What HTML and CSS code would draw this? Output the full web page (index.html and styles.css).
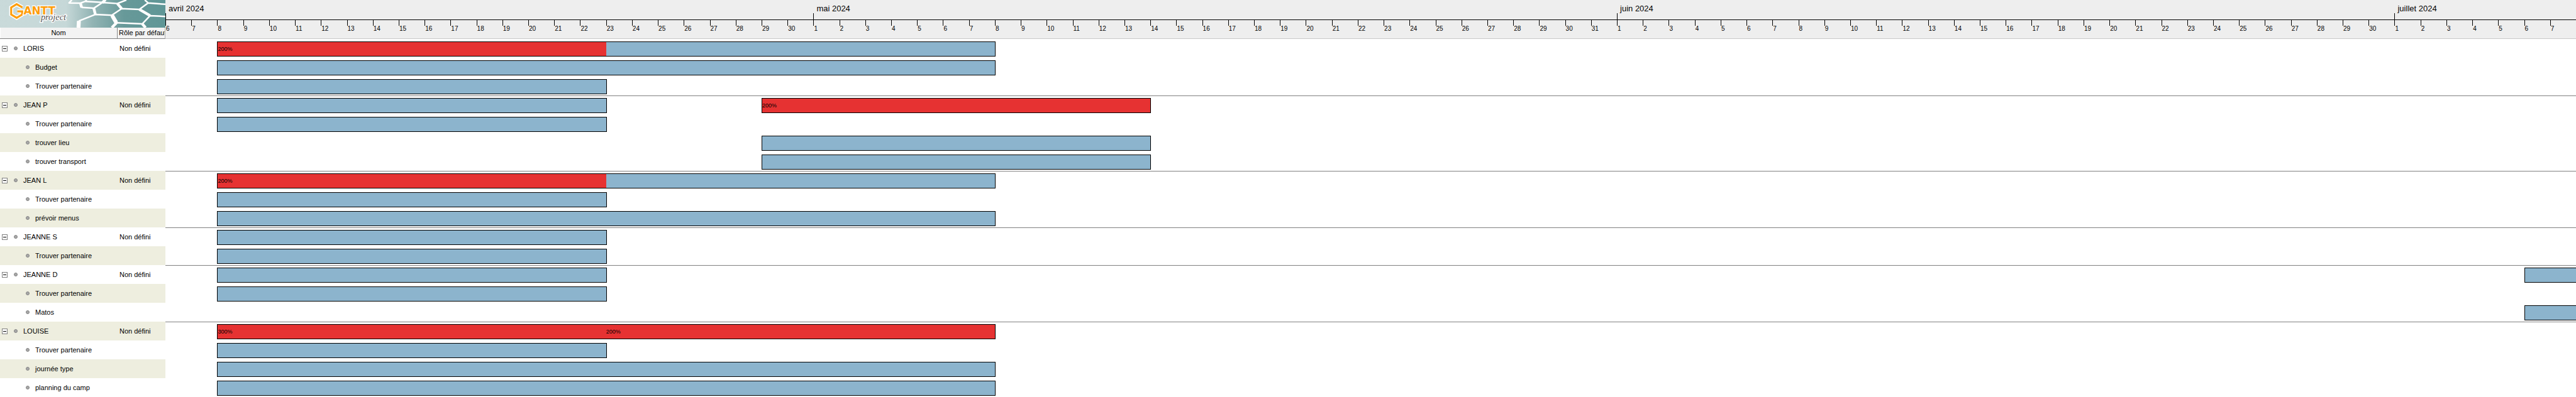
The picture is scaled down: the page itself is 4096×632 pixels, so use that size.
FILE: index.html
```html
<!DOCTYPE html>
<html lang="fr">
<head>
<meta charset="utf-8">
<title>GanttProject - Ressources</title>
<link rel="stylesheet" href="styles.css">
</head>
<body>
<main class="app">
  <section class="resources">
    <svg class="banner" viewBox="0 0 843 141" role="img" aria-label="GanttProject">
      <defs>
        <linearGradient id="sky" x1="0" x2="1" y1="0" y2="0">
          <stop offset="0" stop-color="#c9dada"/>
          <stop offset="0.4" stop-color="#c6d8d8"/>
          <stop offset="0.56" stop-color="#92b4b4"/>
          <stop offset="0.75" stop-color="#679999"/>
          <stop offset="1" stop-color="#5f9696"/>
        </linearGradient>
      </defs>
      <rect width="843" height="141" fill="url(#sky)"/>
      <g transform="translate(330 0)" fill="none" stroke="#fff" stroke-linejoin="round">
        <path stroke-width="8" d="M36 0L22 15L80 16L104 7L190 12L210 0M104 7L112 0M85 38L148 42L192 13L268 18L314 0M155 74L240 78L290 44L380 48L425 15L513 22M425 15L408 0M155 74L72 107M265 116L395 122L435 80L513 84"/>
        <path stroke-width="14" d="M80 16L86 38M148 42L156 74M192 13L206 0M268 18L290 44M240 78L264 116L240 141M380 48L435 80M72 107L70 141M395 122L412 141"/>
        <path stroke-width="20" d="M72 107L70 141M242 80L262 114"/>
      </g>
      <g fill="none" stroke-linejoin="miter">
        <path stroke="#fff" stroke-width="20" d="M114 38L85 21L57 38V74L85 91L113 74V58H88"/>
        <path stroke="#ff9d0a" stroke-width="10" d="M114 38L85 21L57 38V74L85 91L113 74V58H88"/>
      </g>
      <text class="brand" x="120" y="74">ANTT</text>
      <text class="brand-sub" x="208" y="104">project</text>
    </svg>
    <table class="tree">
      <colgroup><col class="col-name"><col class="col-role"></colgroup>
      <thead>
        <tr><th scope="col">Nom</th><th scope="col" class="role-head">Rôle par défaut</th></tr>
      </thead>
      <tbody>
        <tr><td><div class="node"><button class="toggle" aria-label="Réduire LORIS"></button><i class="dot"></i>LORIS</div></td><td>Non défini</td></tr>
        <tr><td><div class="node child"><i class="dot"></i>Budget</div></td><td></td></tr>
        <tr><td><div class="node child"><i class="dot"></i>Trouver partenaire</div></td><td></td></tr>
        <tr><td><div class="node"><button class="toggle" aria-label="Réduire JEAN P"></button><i class="dot"></i>JEAN P</div></td><td>Non défini</td></tr>
        <tr><td><div class="node child"><i class="dot"></i>Trouver partenaire</div></td><td></td></tr>
        <tr><td><div class="node child"><i class="dot"></i>trouver lieu</div></td><td></td></tr>
        <tr><td><div class="node child"><i class="dot"></i>trouver transport</div></td><td></td></tr>
        <tr><td><div class="node"><button class="toggle" aria-label="Réduire JEAN L"></button><i class="dot"></i>JEAN L</div></td><td>Non défini</td></tr>
        <tr><td><div class="node child"><i class="dot"></i>Trouver partenaire</div></td><td></td></tr>
        <tr><td><div class="node child"><i class="dot"></i>prévoir menus</div></td><td></td></tr>
        <tr><td><div class="node"><button class="toggle" aria-label="Réduire JEANNE S"></button><i class="dot"></i>JEANNE S</div></td><td>Non défini</td></tr>
        <tr><td><div class="node child"><i class="dot"></i>Trouver partenaire</div></td><td></td></tr>
        <tr><td><div class="node"><button class="toggle" aria-label="Réduire JEANNE D"></button><i class="dot"></i>JEANNE D</div></td><td>Non défini</td></tr>
        <tr><td><div class="node child"><i class="dot"></i>Trouver partenaire</div></td><td></td></tr>
        <tr><td><div class="node child"><i class="dot"></i>Matos</div></td><td></td></tr>
        <tr><td><div class="node"><button class="toggle" aria-label="Réduire LOUISE"></button><i class="dot"></i>LOUISE</div></td><td>Non défini</td></tr>
        <tr><td><div class="node child"><i class="dot"></i>Trouver partenaire</div></td><td></td></tr>
        <tr><td><div class="node child"><i class="dot"></i>journée type</div></td><td></td></tr>
        <tr><td><div class="node child"><i class="dot"></i>planning du camp</div></td><td></td></tr>
      </tbody>
    </table>
  </section>

  <section class="chart">
    <header class="axis">
      <div class="months days-grid">
        <div class="month" style="grid-column: 1 / 26">avril 2024</div>
        <div class="month" style="grid-column: 26 / 57">mai 2024</div>
        <div class="month" style="grid-column: 57 / 87">juin 2024</div>
        <div class="month" style="grid-column: 87 / 94">juillet 2024</div>
      </div>
      <ol class="days days-grid">
        <li>6</li><li>7</li><li>8</li><li>9</li><li>10</li><li>11</li><li>12</li><li>13</li><li>14</li><li>15</li><li>16</li><li>17</li><li>18</li><li>19</li><li>20</li><li>21</li><li>22</li><li>23</li><li>24</li><li>25</li><li>26</li><li>27</li><li>28</li><li>29</li><li>30</li>
        <li>1</li><li>2</li><li>3</li><li>4</li><li>5</li><li>6</li><li>7</li><li>8</li><li>9</li><li>10</li><li>11</li><li>12</li><li>13</li><li>14</li><li>15</li><li>16</li><li>17</li><li>18</li><li>19</li><li>20</li><li>21</li><li>22</li><li>23</li><li>24</li><li>25</li><li>26</li><li>27</li><li>28</li><li>29</li><li>30</li><li>31</li>
        <li>1</li><li>2</li><li>3</li><li>4</li><li>5</li><li>6</li><li>7</li><li>8</li><li>9</li><li>10</li><li>11</li><li>12</li><li>13</li><li>14</li><li>15</li><li>16</li><li>17</li><li>18</li><li>19</li><li>20</li><li>21</li><li>22</li><li>23</li><li>24</li><li>25</li><li>26</li><li>27</li><li>28</li><li>29</li><li>30</li>
        <li>1</li><li>2</li><li>3</li><li>4</li><li>5</li><li>6</li><li>7</li>
      </ol>
    </header>
    <div class="row days-grid"><div class="bar over open-end" style="grid-column: 3 / 18">200%</div><div class="bar open-start" style="grid-column: 18 / 33"></div></div>
    <div class="row days-grid"><div class="bar" style="grid-column: 3 / 33"></div></div>
    <div class="row days-grid"><div class="bar" style="grid-column: 3 / 18"></div></div>
    <div class="row days-grid first"><div class="bar" style="grid-column: 3 / 18"></div><div class="bar over" style="grid-column: 24 / 39">200%</div></div>
    <div class="row days-grid"><div class="bar" style="grid-column: 3 / 18"></div></div>
    <div class="row days-grid"><div class="bar" style="grid-column: 24 / 39"></div></div>
    <div class="row days-grid"><div class="bar" style="grid-column: 24 / 39"></div></div>
    <div class="row days-grid first"><div class="bar over open-end" style="grid-column: 3 / 18">200%</div><div class="bar open-start" style="grid-column: 18 / 33"></div></div>
    <div class="row days-grid"><div class="bar" style="grid-column: 3 / 18"></div></div>
    <div class="row days-grid"><div class="bar" style="grid-column: 3 / 33"></div></div>
    <div class="row days-grid first"><div class="bar" style="grid-column: 3 / 18"></div></div>
    <div class="row days-grid"><div class="bar" style="grid-column: 3 / 18"></div></div>
    <div class="row days-grid first"><div class="bar" style="grid-column: 3 / 18"></div><div class="bar open-end" style="grid-column: 92 / 94"></div></div>
    <div class="row days-grid"><div class="bar" style="grid-column: 3 / 18"></div></div>
    <div class="row days-grid"><div class="bar open-end" style="grid-column: 92 / 94"></div></div>
    <div class="row days-grid first"><div class="bar over open-end" style="grid-column: 3 / 18">300%</div><div class="bar over open-start" style="grid-column: 18 / 33">200%</div></div>
    <div class="row days-grid"><div class="bar" style="grid-column: 3 / 18"></div></div>
    <div class="row days-grid"><div class="bar" style="grid-column: 3 / 33"></div></div>
    <div class="row days-grid"><div class="bar" style="grid-column: 3 / 33"></div></div>
  </section>
</main>
</body>
</html>
```
FILE: styles.css
```css
* { box-sizing: border-box; }

body {
  margin: 0;
  background: #fff;
  color: #000;
  font-family: "Liberation Sans", Arial, sans-serif;
  font-size: 11px;
}

.app {
  display: grid;
  grid-template-columns: 263px minmax(0, 1fr);
}

/* Resource tree */
.banner { display: block; width: 100%; height: 44px; }
.brand {
  font: bold 54px "DejaVu Sans", Verdana, sans-serif;
  fill: #ff9d0a;
  stroke: #fff;
  stroke-width: 8px;
  paint-order: stroke;
}
.brand-sub {
  font: italic 46px "Liberation Serif", "Times New Roman", serif;
  fill: #555;
  stroke: #fff;
  stroke-width: 8px;
  paint-order: stroke;
}

.tree {
  width: 100%;
  table-layout: fixed;
  border-collapse: separate;
  border-spacing: 0;
}
.col-name { width: 187px; }
.tree th {
  height: 18px;
  padding: 0;
  overflow: hidden;
  border-right: 1px solid #808080;
  border-bottom: 1px solid #808080;
  background: #f3f3f3;
  box-shadow: inset 1px 0 #fff;
  font-weight: normal;
  line-height: 17px;
  white-space: nowrap;
}
.tree .role-head { padding-left: 2px; text-align: left; }
.tree .role-head { border-right-color: #b0b0b0; }
.tree td {
  height: 30px;
  padding: 0 0 0 3px;
  white-space: nowrap;
}
.tree td:first-child { padding-left: 0; }
.tree tbody tr:nth-child(even) { background: #eeeedf; }

.node {
  display: flex;
  align-items: center;
  padding-left: 3px;
}
.child { padding-left: 41px; }
.toggle {
  display: grid;
  flex: none;
  place-items: center;
  width: 9px;
  height: 9px;
  margin: 0 10px 0 0;
  padding: 0;
  border: 1px solid #808080;
  background: #fff;
}
.toggle::before { content: ""; width: 5px; height: 1px; background: #000; }
.dot {
  flex: none;
  width: 6px;
  height: 6px;
  margin-right: 9px;
  border: 1px solid #858585;
  border-radius: 50%;
  background: #a8a8a8;
}

/* Timeline */
.chart { overflow: hidden; }
.days-grid {
  display: grid;
  grid-template-columns: repeat(93, minmax(0, 1fr));
}
.axis {
  height: 62px;
  border-bottom: 1px solid #c9c9c9;
  background: #eee;
}
.months { border-bottom: 1px solid #000; }
.month {
  padding: 7px 0 0 5px;
  font-size: 13px;
  line-height: 14px;
}
.month::after {
  content: "";
  display: block;
  width: 1px;
  height: 10px;
  margin-left: -5px;
  background: #000;
}
.days { margin: 0; padding: 0; list-style: none; }
.days li { padding-left: 1px; font-size: 10px; line-height: 10px; }
.days li::before {
  content: "";
  display: block;
  width: 1px;
  height: 9px;
  margin-left: -1px;
  background: #000;
}

.row { height: 30px; }
.first { box-shadow: inset 0 1px #808080; }
.bar {
  margin: 4px -1px 2px 0;
  border: 1px solid #000;
  background: #8cb4cd;
  font-size: 9px;
  line-height: 22px;
}
.over { background: #e63232; }
.open-end { margin-right: 0; border-right: 0; }
.open-start { border-left: 0; }
```
